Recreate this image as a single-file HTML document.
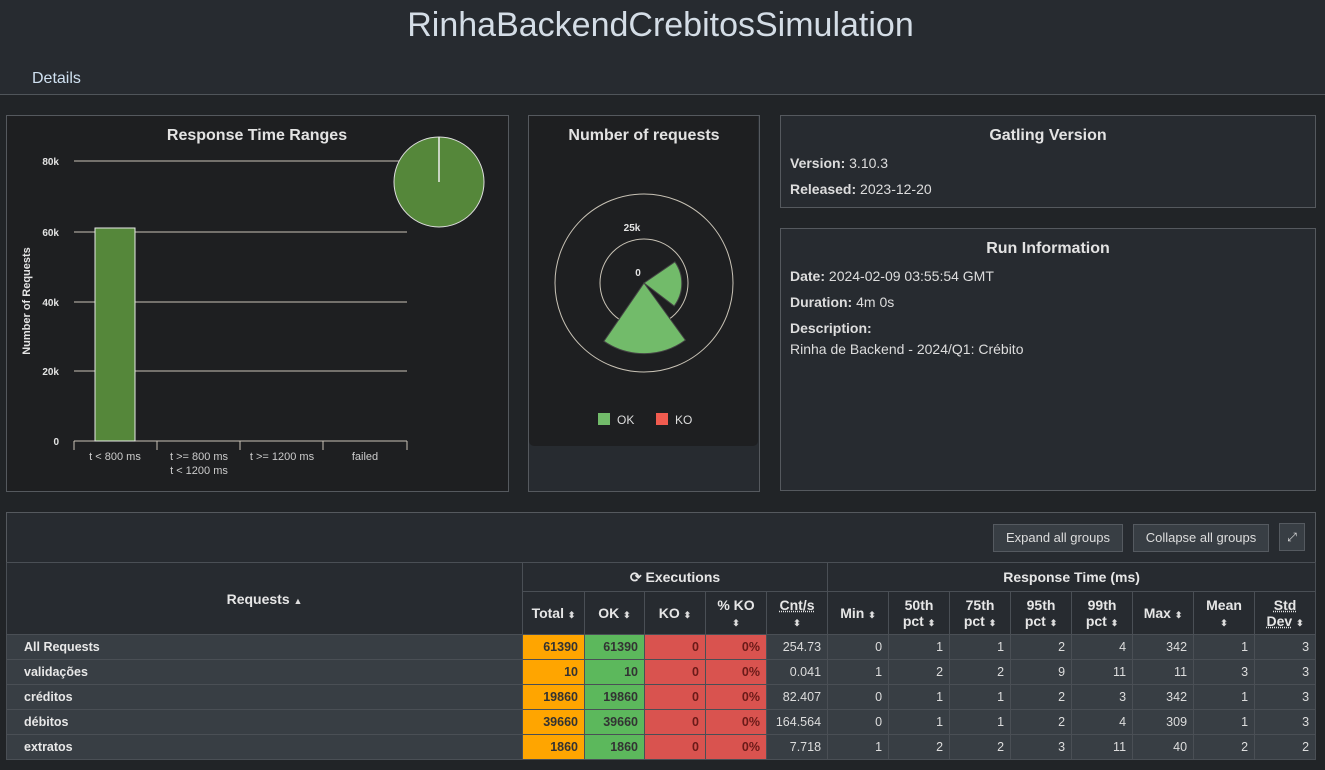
<!DOCTYPE html><html><head><meta charset="utf-8"><style>
*{box-sizing:border-box;margin:0;padding:0}
body{width:1325px;height:770px;background:#212427;font-family:"Liberation Sans",sans-serif;color:#e0e0e0;position:relative;overflow:hidden}
.a{position:absolute}
.hdr{left:0;top:0;width:1325px;height:95px;background:#272b30;border-bottom:1px solid #50555a}
.title{left:0;top:6px;width:1321px;text-align:center;font-size:34px;color:#d4dde6}
.panel{border:1px solid #55595e}
.dark{background:#1e1f21}
.info{background:#272b30}
h3{font-size:16px;font-weight:bold;text-align:center;color:#e3e3e3}
.k{font-weight:bold}
.it{font-size:14px;color:#ddd}
table{border-collapse:collapse;font-size:12.5px}
td,th{border:1px solid #4a4f55;height:25px;padding:0 6px}
th{font-weight:bold;color:#e6e6e6;font-size:14px;background:#272b30}
td{text-align:right;background:#383e44;color:#ddd}
td.n{text-align:left;font-weight:bold;padding-left:17px;color:#e8e8e8}
td.t{background:#ffa500;color:#333;font-weight:bold}
td.o{background:#5cb85c;color:#333;font-weight:bold}
td.x{background:#d9534f;color:#6a1a18;font-weight:bold}
.s{font-size:9px;color:#ddd}
.btn{background:#383e44;border:1px solid #555a60;font-size:13px;color:#ddd;text-align:center;line-height:26px;height:28px}
</style></head><body>
<div class="a hdr"></div>
<div class="a title">RinhaBackendCrebitosSimulation</div>
<div class="a" style="left:32px;top:70px;font-size:16px;color:#cfe0f0">Details</div>

<div class="a panel dark" style="left:6px;top:115px;width:503px;height:377px"></div>
<svg class="a" style="left:6px;top:115px" width="503" height="377">
<text x="251" y="25" text-anchor="middle" font-size="16" font-weight="bold" fill="#e3e3e3" font-family="Liberation Sans">Response Time Ranges</text>
<g stroke="#c9c3b6" stroke-width="1">
<line x1="68" y1="46" x2="401" y2="46"/><line x1="68" y1="117" x2="401" y2="117"/><line x1="68" y1="187" x2="401" y2="187"/><line x1="68" y1="256" x2="401" y2="256"/>
<line x1="68" y1="326" x2="401" y2="326"/>
<line x1="68" y1="326" x2="68" y2="335"/><line x1="151" y1="326" x2="151" y2="335"/><line x1="234" y1="326" x2="234" y2="335"/><line x1="317" y1="326" x2="317" y2="335"/><line x1="401" y1="326" x2="401" y2="335"/>
</g>
<rect x="89" y="113" width="40" height="213" fill="#55873a" stroke="#e8e8e8"/>
<g font-family="Liberation Sans" font-size="10" font-weight="bold" fill="#e3e3e3" text-anchor="end">
<text x="53" y="50">80k</text><text x="53" y="121">60k</text><text x="53" y="191">40k</text><text x="53" y="260">20k</text><text x="53" y="330">0</text></g>
<text transform="translate(24,186) rotate(-90)" text-anchor="middle" font-family="Liberation Sans" font-size="11" font-weight="bold" fill="#e3e3e3">Number of Requests</text>
<g font-family="Liberation Sans" font-size="11" fill="#ccc" text-anchor="middle">
<text x="109" y="345">t &lt; 800 ms</text><text x="193" y="345">t &gt;= 800 ms</text><text x="193" y="359">t &lt; 1200 ms</text><text x="276" y="345">t &gt;= 1200 ms</text><text x="359" y="345">failed</text></g>
<circle cx="433" cy="67" r="45" fill="#55873a" stroke="#ddd"/>
<line x1="433" y1="22" x2="433" y2="67" stroke="#eee" stroke-width="1.5"/>
</svg>

<div class="a panel info" style="left:528px;top:115px;width:232px;height:377px"></div>
<div class="a dark" style="left:529px;top:116px;width:229px;height:330px;border-radius:0 0 5px 5px"></div>
<svg class="a" style="left:528px;top:115px" width="232" height="330">
<text x="116" y="25" text-anchor="middle" font-size="16" font-weight="bold" fill="#e3e3e3" font-family="Liberation Sans">Number of requests</text>
<circle cx="116" cy="168" r="89" fill="none" stroke="#c9c3b6"/>
<circle cx="116" cy="168" r="44" fill="none" stroke="#c9c3b6"/>
<path d="M116 168 L146.9 146.8 A37.5 37.5 0 0 1 146.2 191.0 Z" fill="#72bb6a" stroke="#444" stroke-width="1"/>
<path d="M116 168 L157.4 225.1 A70.5 70.5 0 0 1 75.9 226.2 Z" fill="#72bb6a" stroke="#444" stroke-width="1"/>
<text x="104" y="116" text-anchor="middle" font-size="10" font-weight="bold" fill="#e3e3e3" font-family="Liberation Sans">25k</text>
<text x="110" y="161" text-anchor="middle" font-size="10" font-weight="bold" fill="#e3e3e3" font-family="Liberation Sans">0</text>
<rect x="70" y="298" width="12" height="12" fill="#72bb6a"/><text x="89" y="309" font-size="12" fill="#ddd" font-family="Liberation Sans">OK</text>
<rect x="128" y="298" width="12" height="12" fill="#f15b4f"/><text x="147" y="309" font-size="12" fill="#ddd" font-family="Liberation Sans">KO</text>
</svg>

<div class="a panel info" style="left:780px;top:115px;width:536px;height:93px"></div>
<div class="a" style="left:780px;top:127px;width:536px"><h3>Gatling Version</h3></div>
<div class="a it" style="left:790px;top:155px"><span class="k">Version:</span> 3.10.3</div>
<div class="a it" style="left:790px;top:181px"><span class="k">Released:</span> 2023-12-20</div>

<div class="a panel info" style="left:780px;top:228px;width:536px;height:263px"></div>
<div class="a" style="left:780px;top:240px;width:536px"><h3>Run Information</h3></div>
<div class="a it" style="left:790px;top:268px"><span class="k">Date:</span> 2024-02-09 03:55:54 GMT</div>
<div class="a it" style="left:790px;top:294px"><span class="k">Duration:</span> 4m 0s</div>
<div class="a it" style="left:790px;top:320px"><span class="k">Description:</span></div>
<div class="a it" style="left:790px;top:341px">Rinha de Backend - 2024/Q1: Crébito</div>

<div class="a" style="left:6px;top:512px;width:1310px;height:248px;background:#272b30;border:1px solid #55595e"></div>
<div class="a btn" style="left:993px;top:524px;width:130px">Expand all groups</div>
<div class="a btn" style="left:1133px;top:524px;width:136px">Collapse all groups</div>
<div class="a btn" style="left:1279px;top:523px;width:26px;font-size:12px">⤢</div>

<table class="a" style="left:6px;top:562px;width:1309px;table-layout:fixed">
<colgroup><col style="width:516px"><col style="width:62px"><col style="width:60px"><col style="width:61px"><col style="width:61px"><col style="width:61px"><col style="width:61px"><col style="width:61px"><col style="width:61px"><col style="width:61px"><col style="width:61px"><col style="width:61px"><col style="width:61px"><col style="width:61px"></colgroup>
<tr style="height:29px"><th rowspan="2">Requests <span class="s">▲</span></th><th colspan="5">⟳ Executions</th><th colspan="8">Response Time (ms)</th></tr>
<tr style="height:43px"><th>Total <span class="s">⬍</span></th><th>OK <span class="s">⬍</span></th><th>KO <span class="s">⬍</span></th><th>% KO<br><span class="s">⬍</span></th><th><u style="text-decoration-style:dotted">Cnt/s</u><br><span class="s">⬍</span></th><th>Min <span class="s">⬍</span></th><th>50th<br>pct <span class="s">⬍</span></th><th>75th<br>pct <span class="s">⬍</span></th><th>95th<br>pct <span class="s">⬍</span></th><th>99th<br>pct <span class="s">⬍</span></th><th>Max <span class="s">⬍</span></th><th>Mean<br><span class="s">⬍</span></th><th><u style="text-decoration-style:dotted">Std<br>Dev</u> <span class="s">⬍</span></th></tr>
<tr><td class="n">All Requests</td><td class="t">61390</td><td class="o">61390</td><td class="x">0</td><td class="x">0%</td><td>254.73</td><td>0</td><td>1</td><td>1</td><td>2</td><td>4</td><td>342</td><td>1</td><td>3</td></tr>
<tr><td class="n">validações</td><td class="t">10</td><td class="o">10</td><td class="x">0</td><td class="x">0%</td><td>0.041</td><td>1</td><td>2</td><td>2</td><td>9</td><td>11</td><td>11</td><td>3</td><td>3</td></tr>
<tr><td class="n">créditos</td><td class="t">19860</td><td class="o">19860</td><td class="x">0</td><td class="x">0%</td><td>82.407</td><td>0</td><td>1</td><td>1</td><td>2</td><td>3</td><td>342</td><td>1</td><td>3</td></tr>
<tr><td class="n">débitos</td><td class="t">39660</td><td class="o">39660</td><td class="x">0</td><td class="x">0%</td><td>164.564</td><td>0</td><td>1</td><td>1</td><td>2</td><td>4</td><td>309</td><td>1</td><td>3</td></tr>
<tr><td class="n">extratos</td><td class="t">1860</td><td class="o">1860</td><td class="x">0</td><td class="x">0%</td><td>7.718</td><td>1</td><td>2</td><td>2</td><td>3</td><td>11</td><td>40</td><td>2</td><td>2</td></tr>
</table>
</body></html>
